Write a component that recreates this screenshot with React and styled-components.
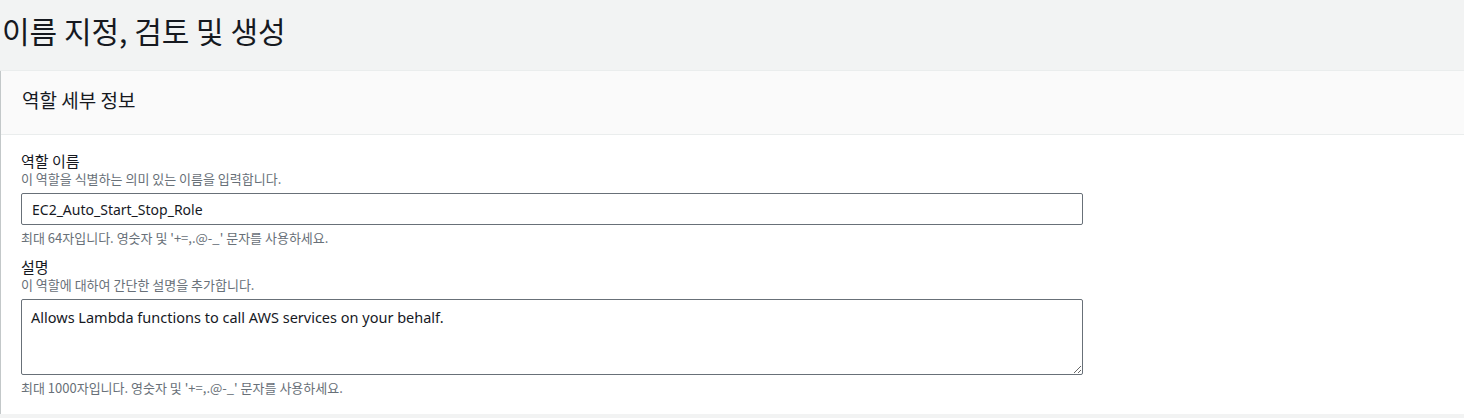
import React from "react";
import styled, { createGlobalStyle } from "styled-components";

const GlobalStyle = createGlobalStyle`
  html, body {
    margin: 0;
    padding: 0;
    background: #f2f3f3;
    overflow: hidden;
  }
  body {
    font-family: "Noto Sans", "Noto Sans CJK KR", sans-serif;
    color: #16191f;
  }
`;

const Page = styled.div`
  display: flex;
  flex-direction: column;
  width: 100%;
`;

const Title = styled.h1`
  margin: 0;
  padding: 10px 0 0 2px;
  height: 60px;
  font-size: 30px;
  font-weight: 400;
  line-height: 40px;
  color: #16191f;
  font-family: "Noto Sans CJK KR", "Noto Sans", sans-serif;
`;

const Card = styled.section`
  margin-right: -10px;
  margin-left: 1px;
  background: #ffffff;
  border-top: 1px solid #eaeded;
  box-shadow: 0 1px 1px 0 rgba(0, 28, 36, 0.3), 1px 1px 1px 0 rgba(0, 28, 36, 0.15),
    -1px 1px 1px 0 rgba(0, 28, 36, 0.15);
`;

const CardHeader = styled.div`
  background: #fafafa;
  border-bottom: 1px solid #eaeded;
  padding: 16px 20px 22px 21px;
  height: 25px;
  display: flex;
  align-items: center;
`;

const CardTitle = styled.h2`
  margin: 0;
  font-size: 19px;
  font-weight: 400;
  line-height: 25px;
  color: #16191f;
  font-family: "Noto Sans CJK KR", "Noto Sans", sans-serif;
`;

const CardBody = styled.div`
  padding: 16px 20px 18px 20px;
  display: flex;
  flex-direction: column;
  gap: 11px;
`;

const Field = styled.div`
  display: flex;
  flex-direction: column;
  width: 1062px;
`;

const Label = styled.label`
  font-size: 15px;
  line-height: 20px;
  color: #16191f;
  font-family: "Noto Sans CJK KR", "Noto Sans", sans-serif;
`;

const Description = styled.div`
  font-size: 13px;
  line-height: 16px;
  color: #687078;
  font-family: "Noto Sans CJK KR", "Noto Sans", sans-serif;
  margin-top: ${(p) => p.$top || 0}px;
`;

const TextInput = styled.input`
  box-sizing: border-box;
  margin-top: 6px;
  width: 100%;
  height: 32px;
  padding: 4px 10px;
  border: 1px solid #687078;
  border-radius: 2px;
  font-family: "Noto Sans", "Noto Sans CJK KR", sans-serif;
  font-size: 14px;
  color: #16191f;
  background: #fff;
  outline: none;
`;

const TextArea = styled.textarea`
  box-sizing: border-box;
  margin-top: 6px;
  width: 100%;
  height: 76px;
  padding: 6px 9px;
  border: 1px solid #687078;
  border-radius: 2px;
  font-family: "Noto Sans", "Noto Sans CJK KR", sans-serif;
  font-size: 14.5px;
  line-height: 22px;
  color: #16191f;
  background: #fff;
  outline: none;
  resize: vertical;
  display: block;
`;

export default function App() {
  return (
    <Page>
      <GlobalStyle />
      <Title>이름 지정, 검토 및 생성</Title>
      <Card>
        <CardHeader>
          <CardTitle>역할 세부 정보</CardTitle>
        </CardHeader>
        <CardBody>
          <Field>
            <Label>역할 이름</Label>
            <Description>이 역할을 식별하는 의미 있는 이름을 입력합니다.</Description>
            <TextInput defaultValue="EC2_Auto_Start_Stop_Role" />
            <Description $top={5}>최대 64자입니다. 영숫자 및 '+=,.@-_' 문자를 사용하세요.</Description>
          </Field>
          <Field>
            <Label>설명</Label>
            <Description>이 역할에 대하여 간단한 설명을 추가합니다.</Description>
            <TextArea defaultValue="Allows Lambda functions to call AWS services on your behalf." />
            <Description $top={5}>최대 1000자입니다. 영숫자 및 '+=,.@-_' 문자를 사용하세요.</Description>
          </Field>
        </CardBody>
      </Card>
    </Page>
  );
}
